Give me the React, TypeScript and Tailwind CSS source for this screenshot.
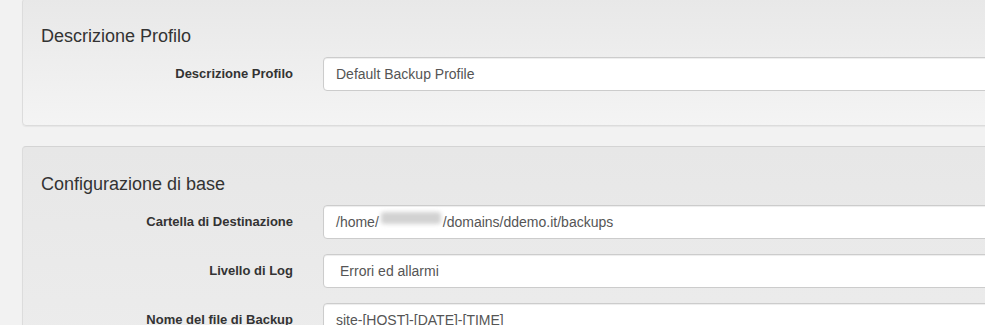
import React from "react";

function Row({ label, children }: { label: string; children: React.ReactNode }) {
  return (
    <div className="flex items-start mb-[15px]">
      <div className="w-[252px] shrink-0 text-right pt-[7px] leading-[20px] text-[13px] font-bold text-[#333]">
        {label}
      </div>
      <div className="ml-[30px] flex-1">{children}</div>
    </div>
  );
}

function Input({ children, extra = "" }: { children: React.ReactNode; extra?: string }) {
  return (
    <div
      className={`h-[34px] bg-white border border-[#cccccc] rounded-[4px] shadow-[inset_0_1px_1px_rgba(0,0,0,0.075)] flex items-center text-[14px] text-[#555] whitespace-nowrap ${extra}`}
    >
      {children}
    </div>
  );
}

export default function App() {
  return (
    <div
      className="w-[985px] h-[325px] overflow-hidden bg-[#f2f2f2] pl-[22px]"
      style={{ fontFamily: '"Liberation Sans", Arial, sans-serif' }}
    >
      <div className="w-[1100px] -mt-[2px]">
        <div className="border border-[#dcdcdc] rounded-[4px] bg-linear-to-b from-[#e8e8e8] to-[#f4f4f4] pt-[27px] pb-[19px] pl-[18px] mb-5 shadow-[0_1px_1px_rgba(0,0,0,0.05)]">
          <h4 className="h-[20px] leading-[20px] text-[18px] text-[#333] mb-[11px]">Descrizione Profilo</h4>
          <Row label="Descrizione Profilo">
            <Input extra="pl-[12px]">Default Backup Profile</Input>
          </Row>
        </div>
        <div className="border border-[#dcdcdc] border-t-[#d4d4d4] rounded-[4px] bg-linear-to-b from-[#e7e7e7] to-[#f2f2f2] pt-[27px] pb-[19px] pl-[18px] h-[420px] shadow-[0_1px_1px_rgba(0,0,0,0.05)]">
          <h4 className="h-[20px] leading-[20px] text-[18px] text-[#333] mb-[11px]">Configurazione di base</h4>
          <Row label="Cartella di Destinazione">
            <Input extra="pl-[12px]">
              <span>/home/</span>
              <span className="inline-block w-[64px] h-[20px] flex items-center">
                <span className="block w-[60px] h-[12px] ml-[2px] bg-[#d2d2d2] rounded-[3px] blur-[2px]"></span>
              </span>
              <span>/domains/ddemo.it/backups</span>
            </Input>
          </Row>
          <Row label="Livello di Log">
            <Input extra="pl-[16px]">Errori ed allarmi</Input>
          </Row>
          <Row label="Nome del file di Backup">
            <Input extra="pl-[12px]">site-[HOST]-[DATE]-[TIME]</Input>
          </Row>
        </div>
      </div>
    </div>
  );
}
